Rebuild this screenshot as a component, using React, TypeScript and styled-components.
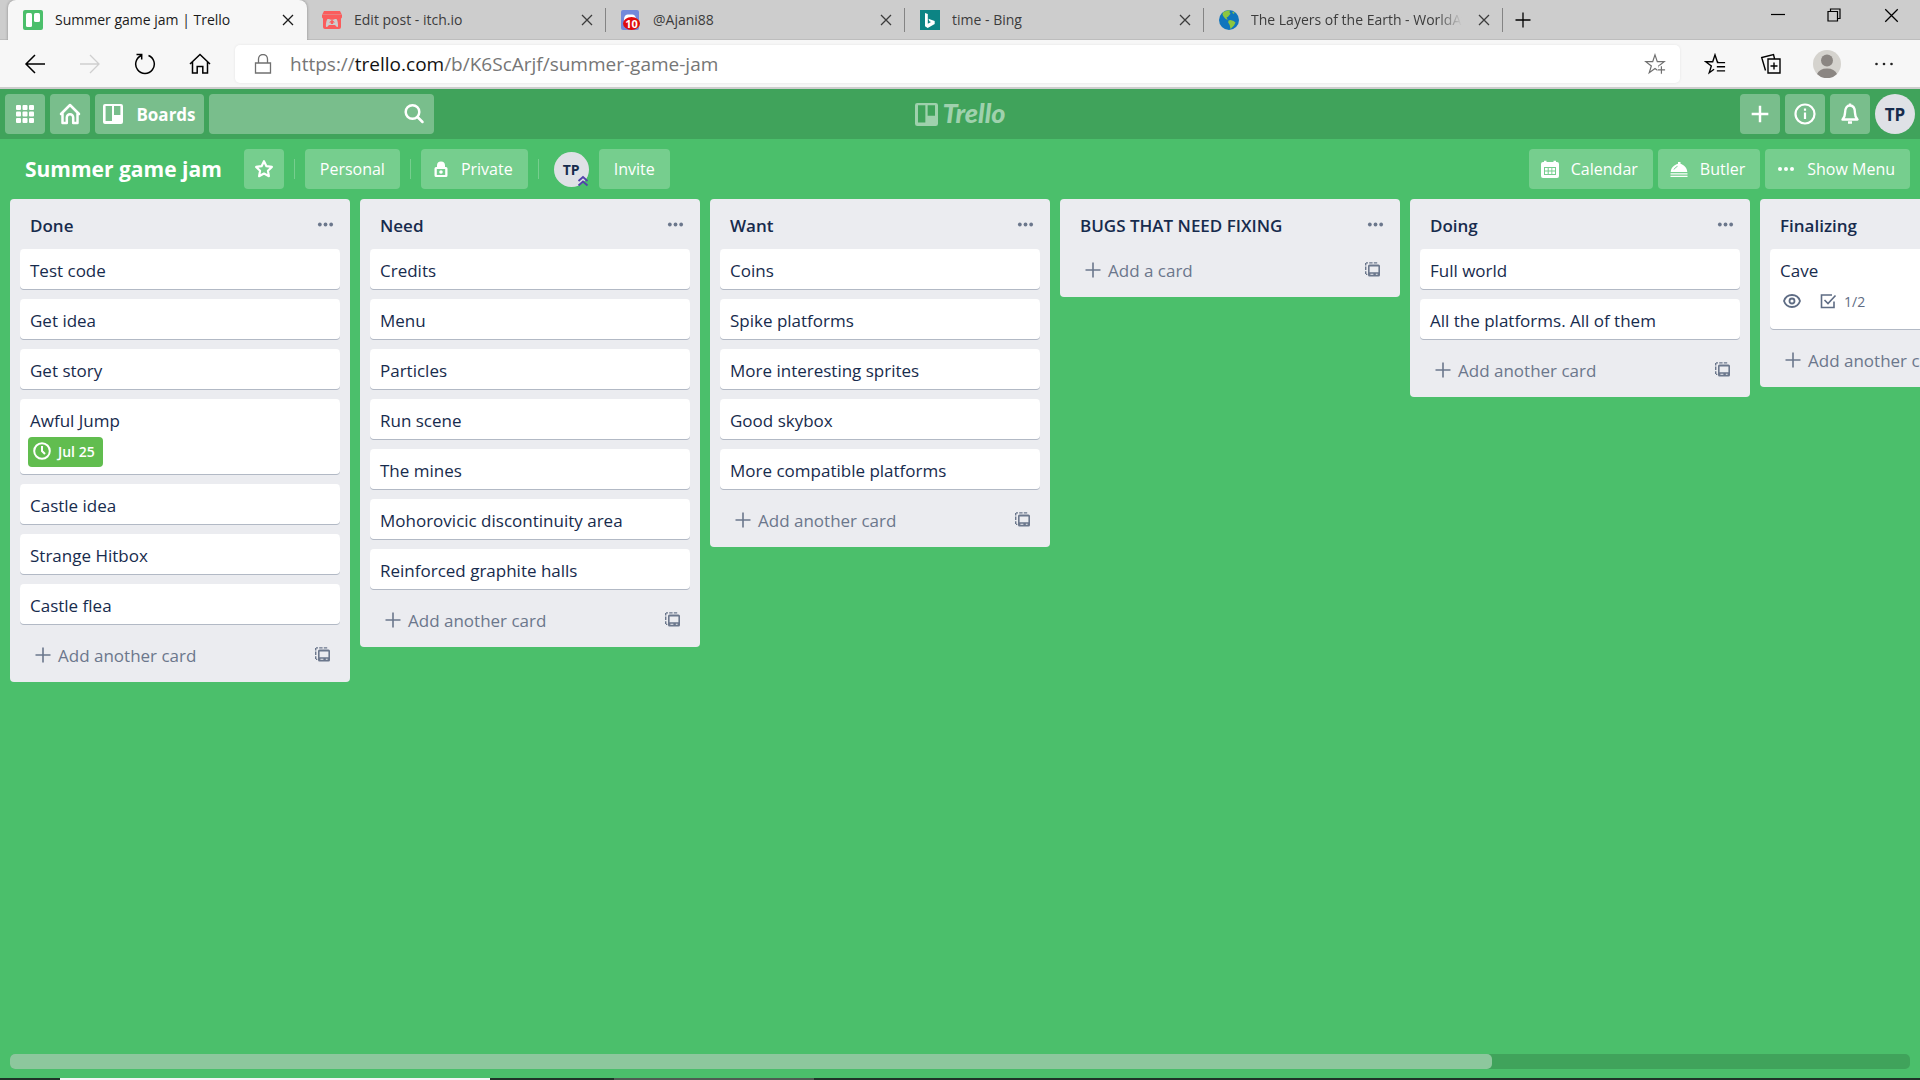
import React from 'react';
import styled, { createGlobalStyle, css } from 'styled-components';

const Global = createGlobalStyle`
  * { box-sizing: border-box; }
  html, body { margin: 0; height: 100%; overflow: hidden; }
  body { font-family: "Open Sans", "Noto Sans", sans-serif; background: #4bbf6b; }
  #root { height: 100%; }
  button, input { font: inherit; color: inherit; border: 0; margin: 0; padding: 0; background: none; }
  svg { display: block; flex: none; }
`;

const Window = styled.div`
  display: flex;
  flex-direction: column;
  height: 100vh;
  overflow: hidden;
`;

/* ---------- browser chrome ---------- */

const TabStrip = styled.div`
  display: flex;
  height: 40px;
  padding-left: 8px;
  background: #cdcdcd;
  box-shadow: inset 0 -1px 0 #bdbdbd;
`;

const Tab = styled.div<{ $active?: boolean }>`
  display: flex;
  align-items: center;
  flex: 0 1 299px;
  min-width: 0;
  padding: 0 9px 0 15px;
  gap: 12px;
  font-size: 14px;
  ${p => p.$active ? css`
    color: #1b1b1b;
    background: #f7f7f7;
    border-radius: 8px 8px 0 0;
    box-shadow: 0 0 3px rgba(0, 0, 0, 0.35);
  ` : css`
    color: #3c3c3c;
    background: linear-gradient(#848484, #848484) right 8px / 1px 24px no-repeat;
  `}
`;

const TabTitle = styled.span<{ $fade?: boolean }>`
  flex: 1;
  min-width: 0;
  padding-bottom: 2px;
  overflow: hidden;
  white-space: nowrap;
  ${p => p.$fade && css`mask-image: linear-gradient(to right, #000 88%, transparent);`}
`;

const PlainButton = styled.button<{ $w?: number }>`
  display: flex;
  align-items: center;
  justify-content: center;
  width: ${p => p.$w ?? 20}px;
  height: 100%;
  flex: none;
`;

const Spacer = styled.div`
  flex: 1;
`;

const WindowControls = styled.div`
  display: flex;
  height: 30px;
`;

const Toolbar = styled.div`
  display: flex;
  align-items: center;
  height: 49px;
  padding: 0 7px;
  background: #f7f7f7;
  border-bottom: 2px solid #cdcdcd;
`;

const Address = styled.label`
  display: flex;
  align-items: center;
  flex: 1;
  height: 38px;
  margin: 0 7px 0 8px;
  padding: 0 14px 0 18px;
  gap: 17px;
  background: #fff;
  border-radius: 5px;
  box-shadow: 0 0 3px rgba(0, 0, 0, 0.08);
`;

const Url = styled.span`
  flex: 1;
  font-size: 19px;
  color: #767676;
  b { font-weight: 400; color: #111; }
`;

/* ---------- Trello header ---------- */

const Header = styled.header`
  display: grid;
  grid-template-columns: 1fr auto 1fr;
  align-items: center;
  height: 50px;
  padding: 0 5px;
  background: #40a35b;
  color: #fff;
`;

const Group = styled.div<{ $end?: boolean }>`
  display: flex;
  gap: 5px;
  justify-content: ${p => (p.$end ? 'flex-end' : 'flex-start')};
`;

const HeaderButton = styled.button<{ $wide?: boolean }>`
  display: flex;
  align-items: center;
  justify-content: center;
  gap: 13px;
  width: ${p => (p.$wide ? 109 : 40)}px;
  height: 40px;
  border-radius: 4px;
  background: rgba(255, 255, 255, 0.3);
  font-size: 17px;
  font-weight: 700;
`;

const Search = styled.label`
  display: flex;
  align-items: center;
  width: 225px;
  height: 40px;
  padding-right: 9px;
  border-radius: 4px;
  background: rgba(255, 255, 255, 0.3);
  input { flex: 1; min-width: 0; height: 100%; padding-left: 10px; outline: none; font-size: 16px; }
`;

const Avatar = styled.button<{ $small?: boolean }>`
  position: relative;
  width: ${p => (p.$small ? 35 : 40)}px;
  height: ${p => (p.$small ? 35 : 40)}px;
  border-radius: 50%;
  background: #dfe1e6;
  color: #172b4d;
  font-size: ${p => (p.$small ? 14 : 17)}px;
  font-weight: 700;
  svg { position: absolute; right: 0; bottom: 0; }
`;

const Logo = styled.a`
  display: flex;
  align-items: center;
  gap: 5px;
  color: #9fd1ad;
  text-decoration: none;
`;

const LogoText = styled.span`
  padding-bottom: 2px;
  font: italic 900 27px/38px Lato, "Open Sans", sans-serif;
`;

/* ---------- board header ---------- */

const BoardBar = styled.div`
  display: flex;
  align-items: center;
  height: 60px;
  padding: 0 10px;
  color: #fff;
`;

const BoardTitle = styled.h1`
  margin: 0 22px 0 15px;
  font-size: 21px;
  line-height: 30px;
  font-weight: 700;
`;

const BoardButton = styled.button<{ $icon?: boolean }>`
  display: flex;
  align-items: center;
  justify-content: center;
  height: 40px;
  padding: ${p => (p.$icon ? '0 15px 0 12px' : '0 15px')};
  gap: 12px;
  border-radius: 4px;
  background: rgba(255, 255, 255, 0.24);
  font-size: 16px;
  white-space: nowrap;
`;

const StarButton = styled(BoardButton)`
  width: 40px;
  padding: 0;
`;

const Divider = styled.span`
  width: 1px;
  height: 20px;
  margin: 0 10px;
  background: rgba(255, 255, 255, 0.24);
`;

const Members = styled.div`
  display: flex;
  align-items: center;
  gap: 10px;
  margin-left: 5px;
`;

/* ---------- lists ---------- */

const Board = styled.main`
  display: flex;
  align-items: flex-start;
  flex: 1;
  min-height: 0;
  gap: 10px;
  padding: 0 10px;
  overflow: hidden;
`;

const ListBox = styled.section`
  flex: 0 0 340px;
  padding: 0 10px 10px;
  border-radius: 4px;
  background: #ebecf0;
`;

const ListHead = styled.div`
  display: flex;
  align-items: center;
  justify-content: space-between;
  height: 50px;
  padding: 0 5px 0 10px;
  color: #6b778c;
`;

const ListTitle = styled.h2`
  margin: 0;
  padding-top: 2px;
  font-size: 17px;
  line-height: 25px;
  font-weight: 600;
  color: #172b4d;
`;

const Card = styled.article`
  margin-bottom: 10px;
  padding: 9px 10px 6px;
  border-radius: 4px;
  background: #fff;
  box-shadow: 0 1px 0 rgba(9, 30, 66, 0.25);
  font-size: 17px;
  line-height: 25px;
  color: #172b4d;
`;

const Badges = styled.div<{ $loose?: boolean }>`
  display: flex;
  gap: 5px;
  margin: 4px 0 ${p => (p.$loose ? 6 : 1)}px -2px;
`;

const Badge = styled.span<{ $green?: boolean }>`
  display: flex;
  align-items: center;
  height: 30px;
  padding: 0 8px 2px 5px;
  gap: 7px;
  border-radius: 4px;
  font-size: 14px;
  color: ${p => (p.$green ? '#fff' : '#5e6c84')};
  background: ${p => (p.$green ? '#61bd4f' : 'transparent')};
  font-weight: ${p => (p.$green ? 600 : 400)};
`;

const ListFoot = styled.div`
  display: flex;
  align-items: center;
  justify-content: space-between;
  height: 38px;
  padding: 4px 9px 0 14px;
  color: #6b778c;
`;

const AddCard = styled.button`
  display: flex;
  align-items: center;
  height: 100%;
  gap: 6px;
  font-size: 17px;
  line-height: 25px;
  white-space: nowrap;
`;

const ScrollTrack = styled.div`
  flex: none;
  height: 15px;
  margin: 0 10px 9px;
  border-radius: 5px;
  background: #40a35b;
`;

const ScrollThumb = styled.div`
  width: 78%;
  height: 100%;
  border-radius: 5px;
  background: #8dc79d;
`;

const Taskbar = styled.div`
  display: flex;
  flex: none;
  height: 2px;
  padding-left: 60px;
  gap: 124px;
  background: #1f3328;
`;

const TaskItem = styled.span<{ $w: number; $c: string }>`
  width: ${p => p.$w}px;
  background: ${p => p.$c};
`;

/* ---------- icons ---------- */

type IconProps = { size?: number; sw?: number; children: React.ReactNode; box?: number; color?: string };
const Icon = ({ size = 20, sw = 2, box = 24, color = 'currentColor', children }: IconProps) => (
  <svg width={size} height={size} viewBox={`0 0 ${box} ${box}`} fill="none" stroke={color} strokeWidth={sw} aria-hidden="true">
    {children}
  </svg>
);

const Dots = ({ size = 18 }: { size?: number }) => (
  <Icon size={size} box={18} sw={0}>
    <g fill="currentColor"><circle cx="3" cy="9" r="2" /><circle cx="9" cy="9" r="2" /><circle cx="15" cy="9" r="2" /></g>
  </Icon>
);
const Close = ({ size = 12, sw = 1.3 }: { size?: number; sw?: number }) => (
  <Icon size={size} box={12} sw={sw}><path d="M1 1l10 10M11 1L1 11" /></Icon>
);
const TrelloMark = ({ size = 20 }: { size?: number }) => (
  <Icon size={size} box={20} sw={0}>
    <path fill="currentColor" fillRule="evenodd" d="M2 0h16a2 2 0 0 1 2 2v16a2 2 0 0 1-2 2H2a2 2 0 0 1-2-2V2a2 2 0 0 1 2-2zm.6 2v15h6.400V2zm8.400 0v9h6.400V2z" />
  </Icon>
);
const Plus = ({ size = 18, sw = 1.6 }: { size?: number; sw?: number }) => (
  <Icon size={size} box={18} sw={sw}><path d="M9 1.500v15M1.500 9h15" /></Icon>
);
const Template = () => (
  <Icon size={16} box={16} sw={0}>
    <g fill="currentColor">
      <path fillRule="evenodd" d="M4.500 2.500h9A1.500 1.500 0 0 1 15 4v9a1.500 1.500 0 0 1-1.500 1.500h-9A1.500 1.500 0 0 1 3 13V4a1.500 1.500 0 0 1 1.500-1.500zm.1 1.900v5.900h8.800V4.400zm.8 7.300v1.100h3v-1.100zm5.400 0v1.100h1.800v-1.100z" />
      <path d="M1 .3h2v1.300H1zM4.200.3h3.400v1.300H4.200zM8.800.3h3.400v1.300H8.800zM0 1h1.400v2.400H0zM0 4.600h1.400V8H0zM0 9.200h1.400v2.900H0zM1 11.800h1.300v1.300H1z" />
    </g>
  </Icon>
);
const star = 'M12 2.600l2.900 6 6.600.9-4.800 4.600 1.200 6.500-5.900-3.100-5.900 3.100 1.200-6.500-4.800-4.600 6.600-.9z';
const edgeStar = 'M12 2l2.500 7.500h7.500l-6 4.600 2.300 7.400-6.300-4.600-6.300 4.600L8 14.100 2 9.500h7.500z';

const TrelloFavicon = () => (
  <Icon size={20} box={20} sw={0}>
    <rect width="20" height="20" rx="2" fill="#4bbf6b" />
    <rect x="3" y="3" width="6" height="14" rx="1.500" fill="#fff" />
    <rect x="11" y="3" width="6" height="9" rx="1.500" fill="#fff" />
  </Icon>
);
const ItchFavicon = () => (
  <Icon size={20} box={20} sw={0}>
    <path fill="#fa5c5c" d="M2 1h16l2 4v1.500a2.200 2.200 0 0 1-1 2V17a2 2 0 0 1-2 2H3a2 2 0 0 1-2-2V8.500a2.200 2.200 0 0 1-1-2V5z" />
    <path stroke="#e08f8f" strokeWidth=".7" d="M0 4.500h20" />
    <path fill="#cdcdcd" d="M5.500 9h1.600c.6 1 5.200 1 5.800 0h1.600c1.400 1.600 2 7.500 1.200 8-1.200.6-2.200-2-3-2H7.300c-.8 0-1.800 2.600-3 2-.8-.5-.2-6.400 1.200-8z" />
    <path fill="#fa5c5c" d="M10 9.800l3 2.800h-1.800V14H8.800v-1.400H7z" />
  </Icon>
);
const CountText = styled.text`
  font: 700 11px "Open Sans", sans-serif;
  fill: #fff;
`;
const DiscordFavicon = () => (
  <Icon size={20} box={20} sw={0}>
    <rect width="18" height="20" rx="2" fill="#7289da" />
    <path fill="#fff" d="M3 10c0-3.500 1-5 3.500-5.500h5C14 5 15 6.500 15 10v2H3z" />
    <ellipse cx="10.500" cy="13.500" rx="8.500" ry="6.500" fill="#e00b0b" />
    <CountText x="10.500" y="17.500" textAnchor="middle">10</CountText>
  </Icon>
);
const BingFavicon = () => (
  <Icon size={20} box={20} sw={0}>
    <rect width="20" height="20" fill="#0c8484" />
    <path fill="#fff" d="M5 3l2.800 1v9.700L11 12l-1.600-.8-1-2.500 6.300 2.200v3l-7 4L5 16.300z" />
  </Icon>
);
const GlobeFavicon = () => (
  <Icon size={20} box={20} sw={0}>
    <circle cx="10" cy="10" r="10" fill="#0f75bd" />
    <path fill="#8dc63f" d="M4 2.500C6 1 9 0 11 .3l-.5 2 1 1.500-2.500 3-1.500.7 1.200 2.200-1-.2C6 8.500 4.500 7 3.500 4.500zM9.500 10.500l2-.6 3 1 2 1.600-1.500 3-2.500 2.500-1 .9-.8-3.900-1.500-2.500zM13.500 1.500l2 1-.5 1.500-1.500-1z" />
  </Icon>
);

/* ---------- data ---------- */

type CardData = { title: string; due?: string; watch?: boolean; checks?: string };
const cards = (...t: string[]): CardData[] => t.map(title => ({ title }));

const lists: { title: string; cards: CardData[] }[] = [
  {
    title: 'Done',
    cards: [
      ...cards('Test code', 'Get idea', 'Get story'),
      { title: 'Awful Jump', due: 'Jul 25' },
      ...cards('Castle idea', 'Strange Hitbox', 'Castle flea'),
    ],
  },
  { title: 'Need', cards: cards('Credits', 'Menu', 'Particles', 'Run scene', 'The mines', 'Mohorovicic discontinuity area', 'Reinforced graphite halls') },
  { title: 'Want', cards: cards('Coins', 'Spike platforms', 'More interesting sprites', 'Good skybox', 'More compatible platforms') },
  { title: 'BUGS THAT NEED FIXING', cards: [] },
  { title: 'Doing', cards: cards('Full world', 'All the platforms. All of them') },
  { title: 'Finalizing', cards: [{ title: 'Cave', watch: true, checks: '1/2' }] },
];

const tabs = [
  { title: 'Summer game jam | Trello', icon: <TrelloFavicon /> },
  { title: 'Edit post - itch.io', icon: <ItchFavicon /> },
  { title: '@Ajani88', icon: <DiscordFavicon /> },
  { title: 'time - Bing', icon: <BingFavicon /> },
  { title: 'The Layers of the Earth - WorldAtlas', icon: <GlobeFavicon />, fade: true },
];

function BrowserChrome() {
  return (
    <>
      <TabStrip>
        {tabs.map((t, i) => (
          <Tab key={t.title} $active={i === 0}>
            {t.icon}
            <TabTitle $fade={t.fade}>{t.title}</TabTitle>
            <PlainButton aria-label="Close tab"><Close /></PlainButton>
          </Tab>
        ))}
        <PlainButton $w={40} aria-label="New tab"><Plus size={18} sw={1.3} /></PlainButton>
        <Spacer />
        <WindowControls>
          <PlainButton $w={56} aria-label="Minimize"><Icon size={14} box={14} sw={1.2}><path d="M0 6.500h14" /></Icon></PlainButton>
          <PlainButton $w={56} aria-label="Restore"><Icon size={14} box={14} sw={1.2}><path d="M1 3.500h9.500V13H1zM3.500 3.500V1H13v9.500h-2.500" /></Icon></PlainButton>
          <PlainButton $w={58} aria-label="Close"><Close size={15} sw={1} /></PlainButton>
        </WindowControls>
      </TabStrip>
      <Toolbar>
        <PlainButton $w={56} aria-label="Back"><Icon size={22} box={22} sw={1.5}><path d="M21 11H2M11 2l-9 9 9 9" /></Icon></PlainButton>
        <PlainButton $w={54} aria-label="Forward"><Icon size={22} box={22} sw={1.3} color="#cfcfcf"><path d="M1 11h19M11 2l9 9-9 9" /></Icon></PlainButton>
        <PlainButton $w={56} aria-label="Refresh"><Icon size={22} box={22} sw={1.5}><path d="M14.500 2.500a9.300 9.300 0 1 1-7 0M2.500 1.500h5.200v5" /></Icon></PlainButton>
        <PlainButton $w={54} aria-label="Home"><Icon size={22} box={22} sw={1.5}><path d="M1 11L11 1.500 21 11M3.500 9V20h4.700v-6.500h5.600V20h4.700V9" /></Icon></PlainButton>
        <Address>
          <Icon size={20} box={20} sw={1.3} color="#707070"><path d="M2.500 9h15v10h-15zM5.500 9V5a4.500 4.500 0 0 1 9 0v4" /></Icon>
          <Url>https://<b>trello.com</b>/b/K6ScArjf/summer-game-jam</Url>
          <Icon size={22} box={24} sw={1.3} color="#707070"><path d={edgeStar} /><path stroke="#fff" strokeWidth="6" d="M19 14v9M14.500 19h9" /><path d="M19 14.500v8M15 18.500h8" /></Icon>
        </Address>
        <PlainButton $w={56} aria-label="Favorites"><Icon size={22} box={24} sw={1.5}><path d="M15.500 9.500h-1L12 2 9.500 9.500H2l6 4.600-2.300 7.400 5.300-3.800M14 10.500h9M14 15h9M14 19.500h9" /></Icon></PlainButton>
        <PlainButton $w={56} aria-label="Collections"><Icon size={22} box={22} sw={1.4}><path d="M8 6h12v14H8zM14 9.500v7M10.500 13h7M5.500 17.500L1.700 4.500 13.500 1.500l1 4" /></Icon></PlainButton>
        <PlainButton $w={56} aria-label="Profile"><Icon size={28} box={28} sw={0}><circle cx="14" cy="14" r="14" fill="#d5d3ce" /><circle cx="14" cy="10.500" r="6" fill="#8b8682" /><path fill="#8b8682" d="M4 24a10.500 8 0 0 1 20 0 14 14 0 0 1-20 0z" /></Icon></PlainButton>
        <PlainButton $w={58} aria-label="Settings"><Icon size={18} box={18} sw={0}><g fill="#222"><circle cx="1.500" cy="9" r="1.300" /><circle cx="9" cy="9" r="1.300" /><circle cx="16.500" cy="9" r="1.300" /></g></Icon></PlainButton>
      </Toolbar>
    </>
  );
}

function TrelloHeader() {
  return (
    <Header>
      <Group>
        <HeaderButton aria-label="Apps">
          <Icon size={18} box={18} sw={0}>
            <g fill="currentColor">
              {[0, 6.500, 13].map(y => [0, 6.500, 13].map(x => <rect key={`${x}-${y}`} x={x} y={y} width="5" height="5" rx="1" />))}
            </g>
          </Icon>
        </HeaderButton>
        <HeaderButton aria-label="Home">
          <Icon size={22} box={22} sw={2.500}><path strokeLinejoin="round" strokeLinecap="round" d="M2 11l9-9 9 9M3.500 10.500V20h4.300v-5.500a3.200 3.200 0 0 1 6.400 0V20h4.300v-9.500" /></Icon>
        </HeaderButton>
        <HeaderButton $wide><TrelloMark />Boards</HeaderButton>
        <Search>
          <input type="text" aria-label="Search" />
          <Icon size={22} box={22} sw={2.500}><circle cx="9.500" cy="9" r="6.800" /><path strokeLinecap="round" d="M14.500 14l5 5" /></Icon>
        </Search>
      </Group>
      <Logo href="#" aria-label="Trello home">
        <TrelloMark size={23} />
        <LogoText>Trello</LogoText>
      </Logo>
      <Group $end>
        <HeaderButton aria-label="Create"><Plus size={20} sw={2.200} /></HeaderButton>
        <HeaderButton aria-label="Information"><Icon size={22} box={22} sw={2.200}><circle cx="11" cy="11" r="9.500" /><path d="M11 9.500V16M11 5.500v2.300" /></Icon></HeaderButton>
        <HeaderButton aria-label="Notifications"><Icon size={22} box={22} sw={2.400}><path strokeLinejoin="round" d="M3.500 16.500c2-2 2.500-3.500 2.500-6.500 0-5 2-7.500 5-7.500s5 2.500 5 7.500c0 3 .5 4.500 2.500 6.500zM9 19.500h4M11 .5v2" /></Icon></HeaderButton>
        <Avatar>TP</Avatar>
      </Group>
    </Header>
  );
}

function BoardHeader() {
  return (
    <BoardBar>
      <BoardTitle>Summer game jam</BoardTitle>
      <StarButton aria-label="Star board"><Icon size={20} sw={2.600}><path strokeLinejoin="round" d={star} /></Icon></StarButton>
      <Divider />
      <BoardButton>Personal</BoardButton>
      <Divider />
      <BoardButton $icon>
        <Icon size={16} box={16} sw={0}><path fill="currentColor" fillRule="evenodd" d="M4 6V4.500a4 4 0 0 1 8 0V6h1a1.500 1.500 0 0 1 1.500 1.500v7A1.500 1.500 0 0 1 13 16H3a1.500 1.500 0 0 1-1.500-1.500v-7A1.500 1.500 0 0 1 3 6zM3.800 8v6h8.400V8zM8 9.200a1.800 1.800 0 1 1 0 3.600 1.800 1.800 0 0 1 0-3.600z" /></Icon>
        Private
      </BoardButton>
      <Divider />
      <Members>
        <Avatar $small>
          TP
          <Icon size={12} box={12} sw={1.800} color="#5243aa"><path d="M1.500 6L6 2l4.500 4M1.500 10.500l4.500-4 4.500 4" /></Icon>
        </Avatar>
        <BoardButton>Invite</BoardButton>
      </Members>
      <Spacer />
      <Group>
        <BoardButton $icon>
          <Icon size={18} box={18} sw={0}><path fill="currentColor" fillRule="evenodd" d="M2 2h1V.800h2.500V2h7V.800H15V2h1a2 2 0 0 1 2 2v12a2 2 0 0 1-2 2H2a2 2 0 0 1-2-2V4a2 2 0 0 1 2-2zm1 5v8h12V7z" /><path fill="currentColor" d="M4 8h2.700v2.500H4zM7.700 8h2.700v2.500H7.700zM11.300 8H14v2.500h-2.700zM4 11.500h2.700V14H4zM7.700 11.500h2.700V14H7.700zM11.300 11.500H14V14h-2.700z" /></Icon>
          Calendar
        </BoardButton>
        <BoardButton $icon>
          <Icon size={18} box={18} sw={0}><path fill="currentColor" d="M8 2h2.500v1.800C14 4.800 17 8 17.300 12H.7C1 8 4 4.800 8 3.800zM.500 13.300h17v1.200H.5zM.500 15.800h17V17H.5z" /><path stroke="#76ce8f" strokeWidth="1" d="M4 9.500C4.700 8 6 7 7.500 6.300" /></Icon>
          Butler
        </BoardButton>
        <BoardButton $icon><Dots />Show Menu</BoardButton>
      </Group>
    </BoardBar>
  );
}

function List({ title, items }: { title: string; items: CardData[] }) {
  return (
    <ListBox>
      <ListHead>
        <ListTitle>{title}</ListTitle>
        <PlainButton aria-label="List actions"><Dots size={17} /></PlainButton>
      </ListHead>
      {items.map(c => (
        <Card key={c.title}>
          {c.title}
          {(c.due || c.watch) && (
            <Badges $loose={c.watch}>
              {c.due && (
                <Badge $green>
                  <Icon size={18} box={18} sw={2}><circle cx="9" cy="9" r="7.800" /><path d="M9 4v5l3 3" /></Icon>
                  {c.due}
                </Badge>
              )}
              {c.watch && (
                <Badge aria-label="Watching">
                  <Icon size={18} box={18} sw={1.800}><path d="M1 9c1.500-4.500 5-6 8-6s6.500 1.500 8 6c-1.500 4.500-5 6-8 6s-6.500-1.500-8-6z" /><circle cx="9" cy="9" r="2.500" /></Icon>
                </Badge>
              )}
              {c.checks && (
                <Badge>
                  <Icon size={18} box={18} sw={1.600}><path d="M13 3H2.500v12.500H15V9.500M5.500 8l3.500 3.500L16.500 3.500" /></Icon>
                  {c.checks}
                </Badge>
              )}
            </Badges>
          )}
        </Card>
      ))}
      <ListFoot>
        <AddCard><Plus size={18} />{items.length ? 'Add another card' : 'Add a card'}</AddCard>
        <PlainButton $w={16} aria-label="Create from template"><Template /></PlainButton>
      </ListFoot>
    </ListBox>
  );
}

export default function App() {
  return (
    <Window>
      <Global />
      <BrowserChrome />
      <TrelloHeader />
      <BoardHeader />
      <Board>
        {lists.map(l => <List key={l.title} title={l.title} items={l.cards} />)}
      </Board>
      <ScrollTrack><ScrollThumb /></ScrollTrack>
      <Taskbar>
        <TaskItem $w={430} $c="#f4f4f4" />
        <TaskItem $w={200} $c="#4e5c52" />
      </Taskbar>
    </Window>
  );
}
